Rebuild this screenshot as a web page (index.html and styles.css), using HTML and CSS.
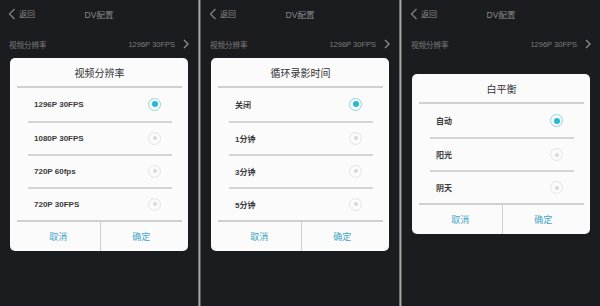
FILE: index.html
```html
<!DOCTYPE html>
<html lang="zh-CN">
<head>
<meta charset="utf-8">
<title>DV配置</title>
<link rel="stylesheet" href="styles.css">
</head>
<body>
<div class="screens">
  <section class="screen">
    <header class="nav">
      <span class="back"><svg class="chev-left" width="8" height="12" viewBox="0 0 8 12"><polyline points="6.5,1 1.5,6 6.5,11" fill="none" stroke="#7d7d7d" stroke-width="1.4"/></svg>返回</span>
      <span class="nav-title">DV配置</span>
      <span></span>
    </header>
    <div class="setting"><span>视频分辨率</span><span class="value">1296P 30FPS<svg class="chev-right" width="6" height="10" viewBox="0 0 6 10"><polyline points="1,1 5,5 1,9" fill="none" stroke="#8a8a8a" stroke-width="1.4"/></svg></span></div>
    <div class="overlay">
      <div class="dialog">
        <div class="dialog-title">视频分辨率</div>
        <ul class="options">
          <li class="option"><span>1296P 30FPS</span><span class="radio on"></span></li>
          <li class="option"><span>1080P 30FPS</span><span class="radio"></span></li>
          <li class="option"><span>720P 60fps</span><span class="radio"></span></li>
          <li class="option"><span>720P 30FPS</span><span class="radio"></span></li>
        </ul>
        <div class="actions"><span class="btn">取消</span><span class="btn">确定</span></div>
      </div>
    </div>
  </section>
  <div class="divider"></div>
  <section class="screen">
    <header class="nav">
      <span class="back"><svg class="chev-left" width="8" height="12" viewBox="0 0 8 12"><polyline points="6.5,1 1.5,6 6.5,11" fill="none" stroke="#7d7d7d" stroke-width="1.4"/></svg>返回</span>
      <span class="nav-title">DV配置</span>
      <span></span>
    </header>
    <div class="setting"><span>视频分辨率</span><span class="value">1296P 30FPS<svg class="chev-right" width="6" height="10" viewBox="0 0 6 10"><polyline points="1,1 5,5 1,9" fill="none" stroke="#8a8a8a" stroke-width="1.4"/></svg></span></div>
    <div class="overlay">
      <div class="dialog">
        <div class="dialog-title">循环录影时间</div>
        <ul class="options">
          <li class="option"><span>关闭</span><span class="radio on"></span></li>
          <li class="option"><span>1分钟</span><span class="radio"></span></li>
          <li class="option"><span>3分钟</span><span class="radio"></span></li>
          <li class="option"><span>5分钟</span><span class="radio"></span></li>
        </ul>
        <div class="actions"><span class="btn">取消</span><span class="btn">确定</span></div>
      </div>
    </div>
  </section>
  <div class="divider"></div>
  <section class="screen">
    <header class="nav">
      <span class="back"><svg class="chev-left" width="8" height="12" viewBox="0 0 8 12"><polyline points="6.5,1 1.5,6 6.5,11" fill="none" stroke="#7d7d7d" stroke-width="1.4"/></svg>返回</span>
      <span class="nav-title">DV配置</span>
      <span></span>
    </header>
    <div class="setting"><span>视频分辨率</span><span class="value">1296P 30FPS<svg class="chev-right" width="6" height="10" viewBox="0 0 6 10"><polyline points="1,1 5,5 1,9" fill="none" stroke="#8a8a8a" stroke-width="1.4"/></svg></span></div>
    <div class="overlay">
      <div class="dialog">
        <div class="dialog-title">白平衡</div>
        <ul class="options">
          <li class="option"><span>自动</span><span class="radio on"></span></li>
          <li class="option"><span>阳光</span><span class="radio"></span></li>
          <li class="option"><span>阴天</span><span class="radio"></span></li>
        </ul>
        <div class="actions"><span class="btn">取消</span><span class="btn">确定</span></div>
      </div>
    </div>
  </section>
</div>
</body>
</html>
```

FILE: styles.css
```css
* { box-sizing: border-box; }
html, body { margin: 0; padding: 0; }
body {
  width: 600px;
  height: 306px;
  overflow: hidden;
  font-family: "Liberation Sans", "Noto Sans CJK SC", sans-serif;
  background: #1b1c20;
}
.screens {
  display: flex;
  width: 600px;
  height: 306px;
}
.screen {
  position: relative;
  width: 198px;
  height: 306px;
  background: #1b1c20;
  flex: none;
}
.divider {
  width: 3px;
  flex: none;
  background: linear-gradient(to right, #3a3a3a 0, #a8a8a8 1px, #a8a8a8 2px, #5a5a5a 2px, #5a5a5a 3px);
}
.nav {
  display: grid;
  grid-template-columns: 1fr auto 1fr;
  align-items: center;
  height: 27px;
  padding: 0 8px;
  color: #8a8a8a;
  font-size: 8px;
}
.back {
  display: flex;
  align-items: center;
  gap: 3px;
}
.nav-title { font-size: 8.5px; }
.setting {
  display: flex;
  justify-content: space-between;
  align-items: center;
  height: 18px;
  margin-top: 8px;
  padding: 0 9px 0 9px;
  color: #7c7c7c;
  font-size: 7.5px;
}
.value {
  display: flex;
  align-items: center;
  gap: 8px;
}
.overlay {
  position: absolute;
  inset: 0;
  display: flex;
  align-items: center;
  justify-content: center;
  padding-top: 2px;
}
.dialog {
  width: 178px;
  background: #fbfbfb;
  border-radius: 5px;
  overflow: hidden;
}
.dialog-title {
  height: 30px;
  line-height: 30px;
  margin: 0 6px 0 7px;
  text-align: center;
  font-size: 10px;
  color: #333;
  border-bottom: 2px solid #d0d0d0;
  font-family: "Noto Sans CJK SC", sans-serif;
}
.options {
  list-style: none;
  margin: 0;
  padding: 0;
}
.option {
  display: flex;
  justify-content: space-between;
  align-items: center;
  height: 33px;
  margin: 0 16px 0 18px;
  padding: 0 11px 0 6px;
  font-size: 8px;
  font-weight: bold;
  color: #3a3a3a;
}
.option + .option { border-top: 2px solid #d4d4d4; }
.radio {
  position: relative;
  width: 13px;
  height: 13px;
  border-radius: 50%;
  border: 1px solid #e4e4e4;
  flex: none;
}
.radio::after {
  content: "";
  position: absolute;
  left: 50%;
  top: 50%;
  width: 4px;
  height: 4px;
  margin: -2px 0 0 -2px;
  border-radius: 50%;
  background: #d8d8d8;
}
.radio.on { border-color: #86d8e8; }
.radio.on::after {
  width: 6px;
  height: 6px;
  margin: -3px 0 0 -3px;
  background: #27b8d6;
}
.actions {
  display: grid;
  grid-template-columns: 1fr 1fr;
  height: 31px;
  margin: 0 6px 0 7px;
  border-top: 2px solid #d0d0d0;
}
.btn {
  display: flex;
  align-items: center;
  justify-content: center;
  font-size: 9px;
  color: #3fa6c8;
}
.btn + .btn { border-left: 1.5px solid #cfcfcf; }
```
